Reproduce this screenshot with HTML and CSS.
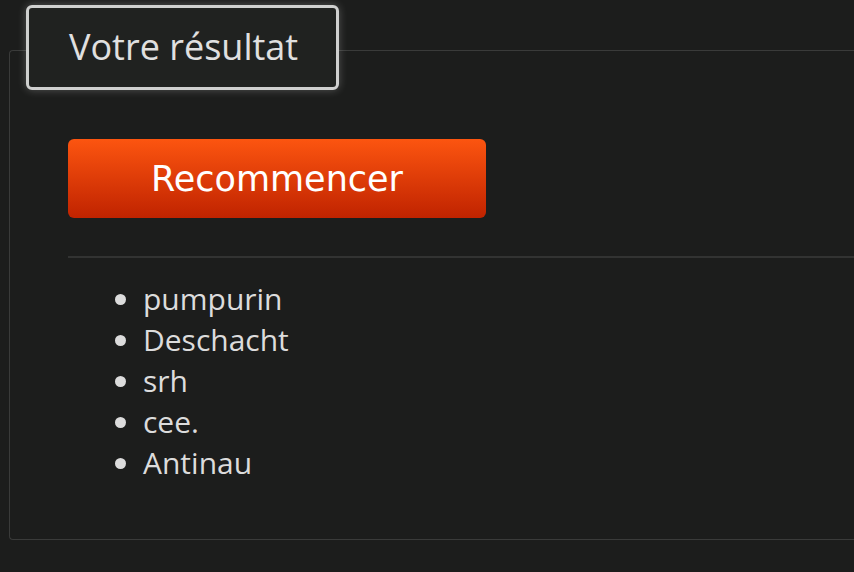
FILE: index.html
```html
<!DOCTYPE html>
<html lang="fr">

<head>
    <meta charset="UTF-8">
    <meta name="viewport" content="width=device-width, initial-scale=1.0">
    <title>Votre résultat</title>
    <link rel="stylesheet" href="styles.css">
</head>

<body>
    <section class="result">
        <h2 class="result-title">Votre résultat</h2>
        <button class="restart">Recommencer</button>
        <hr class="divider">
        <ul class="players">
            <li>pumpurin</li>
            <li>Deschacht</li>
            <li>srh</li>
            <li>cee.</li>
            <li>Antinau</li>
        </ul>
    </section>
</body>

</html>
```

FILE: styles.css
```css
html, body {
    margin: 0;
    padding: 0;
}

body {
    background-color: #1c1d1c;
    color: #dcdcdc;
    font-family: "Open Sans", Arial, sans-serif;
    height: 572px;
    overflow: hidden;
}

/* frame runs off the right side of the window */
.result {
    position: relative;
    margin: 50px 0 0 9px;
    height: 490px;
    border: 1px solid #3a3b3a;
    border-right: none;
    border-radius: 4px 0 0 4px;
    box-sizing: border-box;
    padding: 88px 0 0 58px;
}

/* tab label sitting on top of the frame */
.result-title {
    position: absolute;
    top: -46px;
    left: 16px;
    width: 313px;
    height: 85px;
    margin: 0;
    box-sizing: border-box;
    border: 3px solid #cfd0cf;
    border-radius: 6px;
    background-color: #202220;
    box-shadow: 0 0 8px rgba(255, 255, 255, 0.25);
    padding-left: 40px;
    font-weight: normal;
    font-size: 36px;
    line-height: 78px;
    color: #e0e0e0;
}

.restart {
    display: block;
    width: 418px;
    height: 79px;
    border: none;
    border-radius: 6px;
    background: linear-gradient(#fc5510, #c02300);
    color: #fff;
    font-family: "DejaVu Sans", sans-serif;
    font-size: 35px;
    padding-top: 2px;
    cursor: pointer;
}

.divider {
    margin: 38px 0 0 0;
    border: none;
    border-top: 2px solid #323332;
}

.players {
    margin: 20px 0 0 0;
    padding-left: 75px;
    font-size: 30px;
    line-height: 41px;
}
```
